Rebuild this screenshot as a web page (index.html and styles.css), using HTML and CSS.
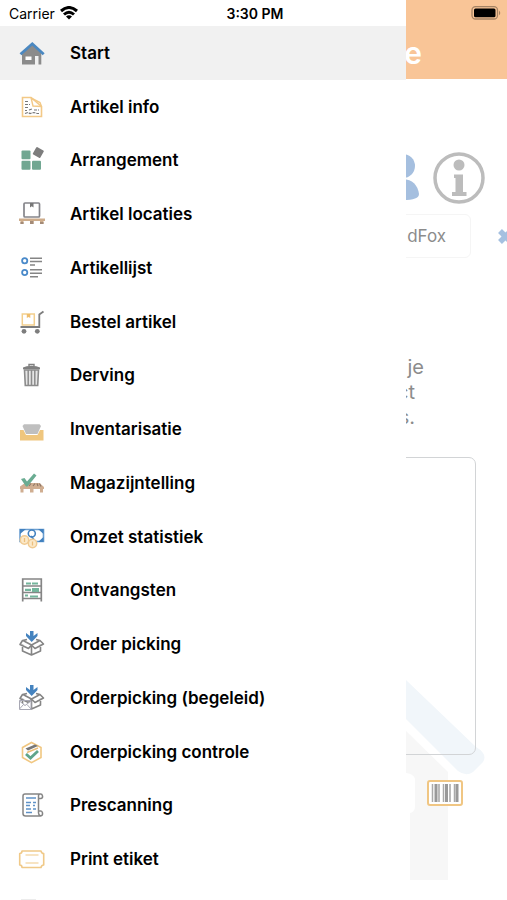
FILE: index.html
```
<!DOCTYPE html>
<html lang="nl">
<head>
  <meta charset="UTF-8">
  <title>Menu</title>
  <meta name="viewport" content="width=device-width, initial-scale=1.0">
  <link rel="stylesheet" href="styles.css">
</head>
<body>

<!-- STATUSBALK -->
<div class="status">
  <div class="carrier">
    <span>Carrier</span>
    <svg width="18" height="14" viewBox="0 0 18 14" fill="none" stroke="#000" stroke-width="3">
      <path d="M1 5Q9-2 17 5"/>
      <path d="M4 8.500Q9 4 14 8.500"/>
      <path d="M6 10.500Q9 8 12 10.500L9 13.500Z" fill="#000" stroke="none"/>
    </svg>
  </div>
  <div class="time">3:30 PM</div>
  <div class="battery">
    <svg width="30" height="14" viewBox="0 0 30 14">
      <rect x="1" y=".7" width="25.500" height="12.300" rx="3.500" fill="#f9c597" stroke="#a58364" stroke-width="1.300"/>
      <rect x="3" y="2.500" width="21.500" height="8.800" rx="1.500" fill="#000"/>
      <path d="M28 4.500Q30.500 7 28 9.200Z" fill="#a58364"/>
    </svg>
  </div>
</div>

<!-- MENU -->
<nav class="drawer">
  <ul class="menu">
    <li><a href="#" class="item active">
      <svg class="icon" viewBox="0 0 28 28"><path d="M4 14L14.300 5 23.300 14V25.500H20.500V17H17V25.500H4Z" fill="#8b8b8b"/><path d="M7.500 17.500h6v3.500h-6z" fill="#fff"/><path d="M2.500 15.300L14.300 4.800 25.700 15.300" fill="none" stroke="#4b88c1" stroke-width="2.800"/></svg>
      <span>Start</span></a></li>
    <li><a href="#" class="item">
      <svg class="icon" viewBox="0 0 28 28" fill="none"><path d="M4.500 4.500H13L23.500 13.500V23.500H4.500Z" stroke="#f3c987" stroke-width="1.600"/><path d="M13 4.500L15 13 23.500 13.500M13 5L22 9.500 23.500 13.500" stroke="#f3c987" stroke-width="1.400"/><path d="M7 8.500h4M7 11.500h5M7 14.500h4M7 17.500h2M11 17l3-1M16 17h5M7 20.500l3-1 2 1 4-1 3 1h2" stroke="#777" stroke-width="1.200" stroke-dasharray="3 1"/></svg>
      <span>Artikel info</span></a></li>
    <li><a href="#" class="item">
      <svg class="icon" viewBox="0 0 28 28"><g fill="#71a792"><rect x="3.500" y="4.500" width="9" height="8.700" rx="1"/><rect x="3.500" y="14.700" width="9" height="9" rx="1"/><rect x="14" y="14.700" width="9" height="9" rx="1"/></g><rect x="16" y="2.200" width="8.600" height="8.600" rx="1" fill="#7d7d7d" transform="rotate(30 20.300 6.500)"/></svg>
      <span>Arrangement</span></a></li>
    <li><a href="#" class="item">
      <svg class="icon" viewBox="0 0 28 28"><rect x="6" y="3" width="15.500" height="14" rx="1" fill="#fff" stroke="#85858a" stroke-width="1.700"/><path d="M12 3h3.500v4.500l-1.800-1.200L12 7.500Z" fill="#777"/><path d="M1 18.500H27V21H25.500V24H22V21H15.500V24H12V21H5.500V24H2.500V21H1Z" fill="#cdac8b"/><path d="M2.500 22h3v2h-3zM12 21h3.500v3H12zM22 22h3.500v2H22z" fill="#a38b78"/></svg>
      <span>Artikel locaties</span></a></li>
    <li><a href="#" class="item">
      <svg class="icon" viewBox="0 0 28 28" fill="none"><g stroke="#4a8aca" stroke-width="1.800"><circle cx="6.700" cy="6.800" r="2.600"/><circle cx="6.700" cy="18.500" r="2.600"/></g><path d="M12 4.200H24M12 7.500H24M12 11H17M12 15.800H24M12 19.200H24M12 22.800H20" stroke="#858585" stroke-width="1.600"/></svg>
      <span>Artikellijst</span></a></li>
    <li><a href="#" class="item">
      <svg class="icon" viewBox="0 0 28 28" fill="none"><rect x="4.300" y="6" width="12" height="11" stroke="#f3cf8d" stroke-width="1.500"/><path d="M8.800 6h3.500v4l-1.800-1-1.700 1Z" fill="#efbd6c"/><path d="M25.500 3.500L21.300 6.500V19H2.500" stroke="#7d7d7d" stroke-width="1.800"/><circle cx="6" cy="23.300" r="2.400" fill="#7d7d7d"/><circle cx="19.300" cy="23.300" r="2.400" fill="#7d7d7d"/></svg>
      <span>Bestel artikel</span></a></li>
    <li><a href="#" class="item">
      <svg class="icon" viewBox="0 0 28 28" fill="none"><path d="M6.500 9L7.300 24.500H19.700L20.500 9Z" fill="#e5e5e5" stroke="#8c8c8c" stroke-width="1.600"/><path d="M10.200 9V24M13.500 9V24M16.800 9V24" stroke="#8c8c8c" stroke-width="1.500"/><path d="M5 8.300V6.500Q8 4.800 13.500 4.800T22 6.500V8.300Z" fill="#808080"/><path d="M11 5V3.500H16V5" stroke="#808080" stroke-width="1.400"/></svg>
      <span>Derving</span></a></li>
    <li><a href="#" class="item">
      <svg class="icon" viewBox="0 0 28 28"><path d="M2 15H5.500L8 20H19.500L22 15H25.500V25.500H2Z" fill="#efc67e"/><path d="M4.500 11L6 9.300H21.500L23 11 19.500 19H8Z" fill="#bfbfbf"/></svg>
      <span>Inventarisatie</span></a></li>
    <li><a href="#" class="item">
      <svg class="icon" viewBox="0 0 28 28"><path d="M2 17.500L7 14H21.500L26 18V20H25V23.500H22V20H15.500V23.500H12V20H5.500V23.500H2.500V20H2Z" fill="#d0ae91"/><path d="M11 17l2-2.500M15 17l2-2.500M20 17l-1-2.500M23 17.500l-1.500-3" stroke="#8f7767" stroke-width="1.200"/><path d="M3 10L6.500 9 9 12.500 16 4.500 18.500 6.500 9.500 17.500H8Z" fill="#6aac92"/></svg>
      <span>Magazijntelling</span></a></li>
    <li><a href="#" class="item">
      <svg class="icon" viewBox="0 0 28 28" fill="none"><path d="M2 6.500H25.500V18.500H2Z" fill="#fff" stroke="#6b9fd1" stroke-width="1.600"/><path d="M2 6H8L2 11ZM25.500 6H20L25.500 11ZM25.500 19H20L25.500 14Z" fill="#4281bf"/><circle cx="13.800" cy="10.500" r="3.500" stroke="#4281bf" stroke-width="1.600"/><path d="M13 13l4 5" stroke="#4281bf" stroke-width="1.500"/><g fill="#fbe9c9" stroke="#f0ca91" stroke-width="1.500"><circle cx="6.500" cy="17" r="4.200"/><circle cx="14.500" cy="20.500" r="4.200"/></g><path d="M6.500 15v4M14.500 18.500v4" stroke="#edbf7c" stroke-width="1.300"/></svg>
      <span>Omzet statistiek</span></a></li>
    <li><a href="#" class="item">
      <svg class="icon" viewBox="0 0 28 28" fill="none"><path d="M4.700 25.500V3H23.300V25.500M4.700 10H23.300M4.700 16.500H23.300M4.700 22.500H23.300" stroke="#858585" stroke-width="1.700"/><path d="M8 7.500H13M14 7.500H20M7 13.800H13M14 13H21M14 15H21M7 19.500H10M12 20.500H20" stroke="#74b59c" stroke-width="2.200"/></svg>
      <span>Ontvangsten</span></a></li>
    <li><a href="#" class="item">
      <svg class="icon" viewBox="0 0 28 28" fill="none"><path d="M4.500 14.500V21L13.500 25 22.500 21V14.500M13.500 16V25M9 9.500L4.500 10.500 2 14.500 10.500 18.500 13.500 15 17 18.500 25.500 14 22 10.500 18 9.500M5 10.500L13.500 15 22 10.500" stroke="#858585" stroke-width="1.600" stroke-linejoin="round"/><path d="M13.700 12L8 6V3L12 6V1H15.500V6L19.500 3V6Z" fill="#4583bf"/></svg>
      <span>Order picking</span></a></li>
    <li><a href="#" class="item">
      <svg class="icon" viewBox="0 0 28 28" fill="none"><path d="M4.500 14.500V21L13.500 25 22.500 21V14.500M13.500 16V25M9 9.500L4.500 10.500 2 14.500 10.500 18.500 13.500 15 17 18.500 25.500 14 22 10.500 18 9.500M5 10.500L13.500 15 22 10.500" stroke="#858585" stroke-width="1.600" stroke-linejoin="round"/><path d="M13.700 12L8 6V3L12 6V1H15.500V6L19.500 3V6Z" fill="#4583bf"/><path d="M1.500 16.500H13V25.500H1.500ZM1.500 17L7 21.500 13 17M1.500 25L5.500 20.500M13 25L9 20.500" fill="#fff" stroke="#a8a8b4"/></svg>
      <span>Orderpicking (begeleid)</span></a></li>
    <li><a href="#" class="item">
      <svg class="icon" viewBox="0 0 28 28" fill="none"><path d="M13.500 4.500L23 9.500V19.500L13.500 24.700 4.500 19.500V9.500Z" stroke="#f1c781" stroke-width="1.600"/><path d="M7.500 10.500L17 6.500 20 8 10 12.500Z" fill="#777"/><path d="M9 14.500L20 10" stroke="#e9bd77" stroke-width="1.400"/><path d="M8 16l4.500 4L20 13" stroke="#5fa58b" stroke-width="2.800"/></svg>
      <span>Orderpicking controle</span></a></li>
    <li><a href="#" class="item">
      <svg class="icon" viewBox="0 0 28 28" fill="none"><path d="M21 7.500H23Q25 7 24.500 4.800T22 3H7Q5 3 5 5V22.500Q5 25 7.500 25H22.500Q25 24.500 24.500 22T22 20H20.500V22M20.500 20V5Q20.500 3 22 3M20.500 22Q20.500 24 22.500 25" stroke="#858585" stroke-width="1.500"/><path d="M8 7H18M8 11.500H13M15 11.500H18M8 14.500H12M15 14.500H17M8 18H13M15 18H18M8 21.500H14" stroke="#5f92c8" stroke-width="1.600"/></svg>
      <span>Prescanning</span></a></li>
    <li><a href="#" class="item">
      <svg class="icon" viewBox="0 0 28 28" fill="none" stroke="#f0c988"><path d="M4 6H23Q23.500 8.500 25.700 8.500V20Q23.500 20 23 22.500H4Q4 20 1.700 20V8.500Q4 8.500 4 6Z" stroke-width="1.600" stroke-linejoin="round"/><path d="M7.500 10H20.500M7.500 18H20.500" stroke-width="1.200"/></svg>
      <span>Print etiket</span></a></li>
  </ul>
  <div class="more">
    <svg width="28" height="2" viewBox="0 0 28 2"><path d="M3 1.500h15" stroke="#ececec"/></svg>
  </div>
</nav>

<!-- PAGINA ACHTER HET MENU -->
<div class="page">
  <header class="topbar"><h1>e</h1></header>

  <main class="content">
    <div class="actions">
      <svg width="28" height="52" viewBox="0 0 28 52" fill="#a5bfdf"><circle cx="12" cy="14" r="12"/><path d="M0 48Q0 28 12 27 26 28 28 42 28 48 12 48Z"/></svg>
      <svg width="52" height="52" viewBox="0 0 52 52"><circle cx="26" cy="26" r="24" fill="none" stroke="#bcbcbc" stroke-width="3.500"/><circle cx="26" cy="13" r="5.500" fill="#bcbcbc"/><path d="M21 22.500H30V40H33.500V44H19V40H22.500V26H21Z" fill="#bcbcbc"/></svg>
    </div>

    <div class="search">
      <input type="text" value="dFox" aria-label="Gebruiker">
      <button type="button" class="clear" aria-label="Wissen">
        <svg width="17" height="17" viewBox="0 0 17 17"><path d="M3 3L14 14M14 3L3 14" stroke="#a5c0e0" stroke-width="5.500"/></svg>
      </button>
    </div>

    <p class="intro">
      <span>je</span>
      <span class="short">ct</span>
      <span class="short">s.</span>
    </p>

    <div class="card"></div>

    <div class="scanbar">
      <button type="button" class="scan" aria-label="Scannen">
        <svg width="36" height="26" viewBox="0 0 36 26"><rect x="1" y="1" width="34" height="24" rx="2" fill="#fff" stroke="#f0c683" stroke-width="2"/><path d="M5.500 4V22M16.500 4V22M27.500 4V22" stroke="#aaa" stroke-width="1.500"/><path d="M9 4V22M19.500 4V22M30 4V22" stroke="#999" stroke-width="3"/><path d="M12 4V22M23 4V22" stroke="#bbb" stroke-width="2"/></svg>
      </button>
    </div>
  </main>

  <svg class="watermark" width="80" height="202" viewBox="0 0 80 202">
    <path d="M0 53L42 94V202H4V135Q9 134 9 128V101Q8 96 0 95Z" fill="#f7f7f7"/>
    <path d="M0 2L70 69Q82 76 77 84L67 94Q60 99 52 93L0 41Z" fill="#f1f6fa"/>
  </svg>
</div>

</body>
</html>
```

FILE: styles.css
```
* { box-sizing: border-box; margin: 0; padding: 0; }

body {
  font-family: Inter, "Liberation Sans", sans-serif;
  background: #fff;
  color: #000;
  height: 100vh;
  overflow: hidden;
  position: relative;
}

svg {
  display: block;
  flex: none;
}

button {
  border: none;
  background: none;
  cursor: pointer;
}

/* Statusbalk */
.status {
  position: absolute;
  top: 0;
  left: 0;
  right: 0;
  z-index: 3;
  height: 26px;
  padding: 0 6px 0 9px;
  display: grid;
  grid-template-columns: 1fr auto 1fr;
  align-items: center;
  font-size: 14px;
}

.carrier {
  display: flex;
  align-items: center;
  gap: 5px;
}

.time {
  font-weight: 600;
}

.battery {
  justify-self: end;
}

/* Menu */
.drawer {
  position: absolute;
  top: 0;
  bottom: 0;
  left: 0;
  z-index: 2;
  width: 80%;
  padding-top: 26px;
  background: #fff;
  display: flex;
  flex-direction: column;
}

.menu {
  flex: 1;
  display: grid;
  grid-auto-rows: 1fr;
  list-style: none;
}

.item {
  height: 100%;
  padding-left: 18px;
  display: flex;
  align-items: center;
  gap: 24px;
  color: #000;
  font-size: 17px;
  font-weight: 600;
  text-decoration: none;
}

.item.active {
  background: #f1f1f1;
}

.icon {
  width: 28px;
  height: 28px;
}

.more {
  height: 14px;
  padding: 12px 0 0 18px;
}

/* Pagina */
.topbar {
  height: 79px;
  padding: 34px 85px 0 0;
  background: #f9c597;
  color: #fff;
  text-align: right;
}

h1 {
  font-size: 30px;
  font-weight: 600;
  line-height: 38px;
}

.content {
  position: relative;
  z-index: 1;
  padding-top: 73px;
}

.actions {
  display: flex;
  justify-content: flex-end;
  gap: 14px;
  padding-right: 22px;
}

.search {
  margin-top: 10px;
  display: flex;
  align-items: center;
  justify-content: flex-end;
  gap: 26px;
}

.search input {
  width: 80%;
  height: 44px;
  padding-right: 24px;
  border: 1px solid #f5f5f5;
  border-radius: 6px;
  background: none;
  color: #8c8c8c;
  font-family: inherit;
  font-size: 17px;
  text-align: right;
  outline: none;
}

.clear {
  width: 10px;
  overflow: hidden;
}

.intro {
  margin-top: 97px;
  padding-right: 83px;
  color: #8c8c8c;
  font-size: 20px;
  line-height: 25px;
  text-align: right;
}

.intro span {
  display: block;
}

.intro .short {
  padding-right: 9px;
}

.card {
  height: 298px;
  margin: 27px 31px 0;
  border: 1px solid #d2d4d6;
  border-radius: 7px;
}

.scanbar {
  padding: 25px 44px 0;
  display: flex;
  justify-content: flex-end;
}

.watermark {
  position: absolute;
  right: 21px;
  bottom: 20px;
}
```
